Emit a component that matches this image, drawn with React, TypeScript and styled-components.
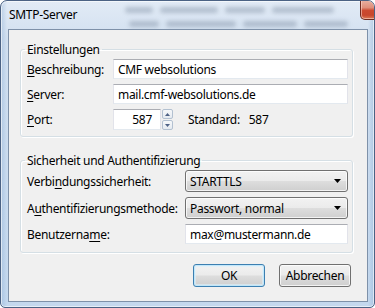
import React from 'react';
import styled, { createGlobalStyle, css } from 'styled-components';

const GlobalStyle = createGlobalStyle`
  html, body {
    margin: 0;
    padding: 0;
    background: #ffffff;
  }
  body {
    font-family: "Segoe UI", "Noto Sans", sans-serif;
    font-size: 12px;
    letter-spacing: -0.3px;
    color: #000000;
  }
`;

const Window = styled.div`
  box-sizing: border-box;
  width: 375px;
  height: 308px;
  display: flex;
  flex-direction: column;
  border: 1px solid #4b6284;
  border-radius: 7px 7px 5px 5px;
  overflow: hidden;
  background:
    linear-gradient(90deg, rgba(120, 160, 205, 0.35) 0px, rgba(255, 255, 255, 0) 6px),
    linear-gradient(270deg, rgba(120, 160, 205, 0.35) 0px, rgba(255, 255, 255, 0) 6px),
    linear-gradient(180deg, #e2ebf6 0%, #d2e0f0 12%, #c4d8ee 100%);
  box-shadow: inset 0 0 0 1px rgba(255, 255, 255, 0.6);
`;

const TitleBar = styled.div`
  height: 28px;
  display: flex;
  align-items: flex-start;
  padding: 0 5px 0 8px;
  overflow: hidden;
`;

const Title = styled.span`
  margin-top: 6px;
  line-height: 15px;
  color: #000000;
  white-space: nowrap;
`;

/* blurred content behind the glass title bar */
const Backdrop = styled.div`
  flex: 1;
  display: flex;
  flex-direction: column;
  gap: 8px;
  padding: 6px 12px 0 48px;
  filter: blur(2.2px);
`;

const Smudge = styled.div`
  display: flex;
  gap: 7px;
  padding-left: ${(p: { $indent?: number }) => p.$indent ?? 0}px;
`;

const Blot = styled.span<{ $w: number }>`
  width: ${(p) => p.$w}px;
  height: 6px;
  border-radius: 3px;
  background: rgba(70, 85, 110, 0.28);
`;

const CloseButton = styled.div`
  width: 46px;
  height: 20px;
  margin-top: -1px;
  flex-shrink: 0;
  display: flex;
  align-items: center;
  justify-content: center;
  box-sizing: border-box;
  border: 1px solid #6f2b20;
  border-top: none;
  border-radius: 0 0 5px 5px;
  background: linear-gradient(180deg, #eab2a3 0%, #df8f7b 40%, #cc4a30 55%, #c8472d 80%, #dc7a56 100%);
  box-shadow: inset 0 0 0 1px rgba(255, 220, 210, 0.55);
`;

const Client = styled.div`
  flex: 1;
  margin: 0 6px 5px 7px;
  border: 1px solid #7e91a9;
  background: #f0f0f0;
  padding: 12px 14px 0 11px;
  display: flex;
  flex-direction: column;
`;

const Group = styled.fieldset<{ $space?: number; $bottom?: number }>`
  margin: ${(p) => p.$space ?? 0}px 0 0 0;
  padding: 2px 4px ${(p) => p.$bottom ?? 6}px 6px;
  min-width: 0;
  border: 1px solid #d5dfe5;
  border-radius: 3px;
  box-shadow: inset 1px 1px 0 #ffffff, 1px 1px 0 #ffffff;
`;

const Legend = styled.legend`
  margin-left: -2px;
  padding: 0 2px;
  line-height: 15px;
  color: #000000;
`;

const Form = styled.div<{ $label: number }>`
  display: grid;
  grid-template-columns: ${(p) => p.$label}px 1fr;
  row-gap: 5px;
  align-items: center;
`;

const Label = styled.label`
  white-space: nowrap;
  line-height: 15px;
`;

const Key = styled.span`
  text-decoration: underline;
  text-underline-offset: 2px;
`;

const fieldBorder = css`
  box-sizing: border-box;
  border: 1px solid #e2e3ea;
  border-top-color: #abadb3;
  border-bottom-color: #e3e9ef;
  background: #ffffff;
`;

const TextBox = styled.div<{ $width?: number; $align?: string; $height?: number }>`
  ${fieldBorder};
  height: ${(p) => p.$height ?? 20}px;
  width: ${(p) => (p.$width ? `${p.$width}px` : 'auto')};
  padding: 0 ${(p) => (p.$align === 'right' ? 8 : 4)}px 0 4px;
  display: flex;
  align-items: center;
  justify-content: ${(p) => (p.$align === 'right' ? 'flex-end' : 'flex-start')};
  white-space: nowrap;
`;

const PortRow = styled.div`
  display: flex;
  align-items: center;
  height: 21px;
`;

const Spin = styled.div`
  display: flex;
  flex-direction: column;
  gap: 1px;
  margin-left: 1px;
  height: 21px;
`;

const SpinButton = styled.div`
  box-sizing: border-box;
  width: 11px;
  height: 10px;
  border: 1px solid #b3c1d1;
  border-radius: 2px;
  background: linear-gradient(180deg, #f6f8fa 0%, #e5eaf0 100%);
  display: flex;
  align-items: center;
  justify-content: center;
`;

const StandardText = styled.span`
  margin-left: 15px;
  white-space: nowrap;
`;

const StandardValue = styled.span`
  margin-left: 9px;
`;

const buttonFace = css`
  box-sizing: border-box;
  border: 1px solid #707070;
  border-radius: 3px;
  background: linear-gradient(180deg, #f2f2f2 0%, #ebebeb 48%, #dddddd 52%, #cfcfcf 100%);
  box-shadow: inset 0 0 0 1px rgba(255, 255, 255, 0.75);
`;

const Select = styled.div`
  ${buttonFace};
  height: 22px;
  display: flex;
  align-items: center;
  justify-content: space-between;
  padding: 0 6px 0 4px;
  white-space: nowrap;
`;

const Buttons = styled.div`
  display: flex;
  justify-content: flex-end;
  gap: 14px;
  margin-top: 11px;
  padding-right: 2px;
`;

const Button = styled.div<{ $default?: boolean }>`
  ${buttonFace};
  width: 72px;
  height: 23px;
  display: flex;
  align-items: center;
  justify-content: center;
  ${(p) =>
    p.$default &&
    css`
      border-color: #3c7fb1;
      box-shadow: inset 0 0 0 1px rgba(190, 230, 250, 0.9), inset 0 0 0 2px rgba(220, 240, 252, 0.6);
    `}
`;

function Arrow() {
  return (
    <svg width="7" height="4" viewBox="0 0 7 4">
      <path d="M0 0 H7 L3.5 4 Z" fill="#000000" />
    </svg>
  );
}

function SpinArrow({ up }: { up?: boolean }) {
  return (
    <svg width="5" height="3" viewBox="0 0 5 3">
      <path d={up ? 'M0 3 H5 L2.5 0 Z' : 'M0 0 H5 L2.5 3 Z'} fill="#4d6185" />
    </svg>
  );
}

function CloseGlyph() {
  return (
    <svg width="12" height="11" viewBox="0 0 12 11">
      <path d="M2 1.5 L10 9.5 M10 1.5 L2 9.5" stroke="#5a2018" strokeWidth="4" strokeLinecap="round" opacity="0.55" />
      <path d="M2 1.5 L10 9.5 M10 1.5 L2 9.5" stroke="#ffffff" strokeWidth="2.4" strokeLinecap="round" />
    </svg>
  );
}

export default function App() {
  return (
    <>
      <GlobalStyle />
      <Window>
        <TitleBar>
          <Title>SMTP-Server</Title>
          <Backdrop>
            <Smudge>
              <Blot $w={28} />
              <Blot $w={58} />
              <Blot $w={40} />
              <Blot $w={62} />
            </Smudge>
            <Smudge $indent={4}>
              <Blot $w={30} />
              <Blot $w={70} />
              <Blot $w={54} />
              <Blot $w={44} />
            </Smudge>
          </Backdrop>
          <CloseButton>
            <CloseGlyph />
          </CloseButton>
        </TitleBar>
        <Client>
          <Group>
            <Legend>Einstellungen</Legend>
            <Form $label={86}>
              <Label>
                <Key>B</Key>eschreibung:
              </Label>
              <TextBox>CMF websolutions</TextBox>
              <Label>
                <Key>S</Key>erver:
              </Label>
              <TextBox>mail.cmf-websolutions.de</TextBox>
              <Label>
                <Key>P</Key>ort:
              </Label>
              <PortRow>
                <TextBox $width={48} $align="right" $height={21}>
                  587
                </TextBox>
                <Spin>
                  <SpinButton>
                    <SpinArrow up />
                  </SpinButton>
                  <SpinButton>
                    <SpinArrow />
                  </SpinButton>
                </Spin>
                <StandardText>Standard:</StandardText>
                <StandardValue>587</StandardValue>
              </PortRow>
            </Form>
          </Group>
          <Group $space={16} $bottom={8}>
            <Legend>Sicherheit und Authentifizierung</Legend>
            <Form $label={158}>
              <Label>
                Verbi<Key>n</Key>dungssicherheit:
              </Label>
              <Select>
                STARTTLS
                <Arrow />
              </Select>
              <Label>
                A<Key>u</Key>thentifizierungsmethode:
              </Label>
              <Select>
                Passwort, normal
                <Arrow />
              </Select>
              <Label>
                Benutzerna<Key>m</Key>e:
              </Label>
              <TextBox>max@mustermann.de</TextBox>
            </Form>
          </Group>
          <Buttons>
            <Button $default>OK</Button>
            <Button>Abbrechen</Button>
          </Buttons>
        </Client>
      </Window>
    </>
  );
}
